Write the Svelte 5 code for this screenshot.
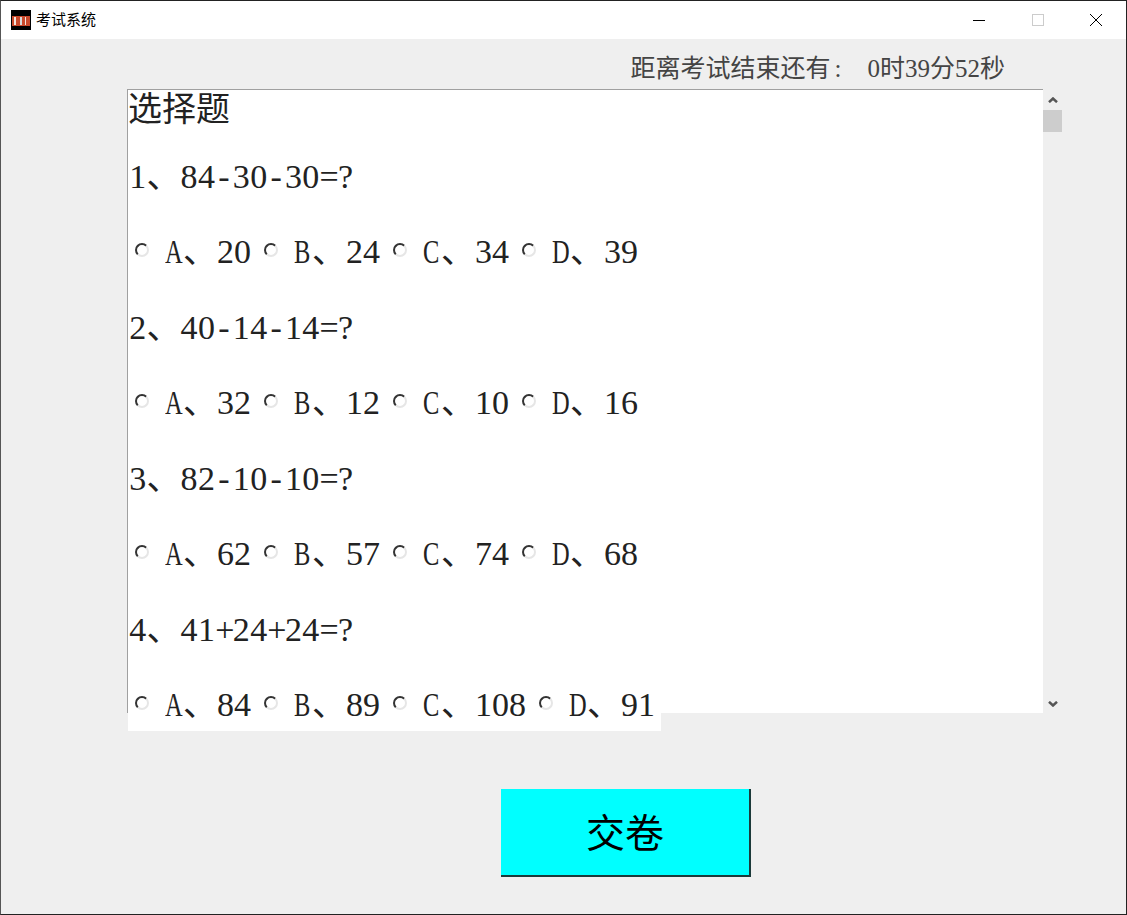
<script>
  // Exam window: choice questions with a countdown
  const questions = [
    { text: '84-30-30=?', options: ['20', '24', '34', '39'] },
    { text: '40-14-14=?', options: ['32', '12', '10', '16'] },
    { text: '82-10-10=?', options: ['62', '57', '74', '68'] },
    { text: '41+24+24=?', options: ['84', '89', '108', '91'] }
  ];
  const letters = ['A', 'B', 'C', 'D'];
</script>

{#snippet mono(s)}{#each s.split('') as c}<span class="ch" class:up={/[A-Z]/.test(c)}>{c}</span>{/each}{/snippet}

<div class="window">
  <header class="titlebar">
    <svg class="logo" width="20" height="20" viewBox="0 0 20 20">
      <rect width="20" height="20" fill="#000" />
      <rect x="1" y="6" width="18" height="10" fill="#c8492c" />
      <rect x="3" y="7" width="2" height="8" fill="#f3e4dc" />
      <rect x="9" y="7" width="2" height="8" fill="#d8d8d8" />
      <rect x="14" y="7" width="1" height="8" fill="#f3e4dc" />
    </svg>
    <span class="title">考试系统</span>
    <div class="controls">
      <svg width="12" height="12" viewBox="0 0 12 12"><path d="M0 6.5H12" stroke="#000" fill="none" /></svg>
      <svg width="12" height="12" viewBox="0 0 12 12"><rect x=".5" y=".5" width="11" height="11" stroke="#ccc" fill="none" /></svg>
      <svg width="12" height="12" viewBox="0 0 12 12"><path d="M0 0L12 12M12 0L0 12" stroke="#000" fill="none" /></svg>
    </div>
  </header>

  <main class="body">
    <div class="timer">
      <span>距离考试结束还有<span class="colon">:</span></span>
      <span>0时39分52秒</span>
    </div>

    <div class="exam">
      <section class="panel">
        <div class="content">
          <h2 class="heading">选择题</h2>
          {#each questions as q, i}
            <div class="line question">{@render mono(String(i + 1))}、{@render mono(q.text)}</div>
            <div class="line options">
              {#each q.options as opt, j}
                <label class="option">
                  <input type="radio" name={'q' + i} />
                  <span class="answer">{@render mono(letters[j])}、{@render mono(opt)}</span>
                </label>
              {/each}
            </div>
          {/each}
        </div>
      </section>
      <div class="scrollbar">
        <svg class="arrow" width="10" height="6" viewBox="0 0 10 6"><path d="M1 5.2L5 1.5L9 5.2" stroke="#555" stroke-width="2.5" fill="none" /></svg>
        <div class="thumb"></div>
        <svg class="arrow down" width="10" height="6" viewBox="0 0 10 6"><path d="M1 .8L5 4.5L9 .8" stroke="#555" stroke-width="2.5" fill="none" /></svg>
      </div>
    </div>

    <div class="actions">
      <button class="submit">交卷</button>
    </div>
  </main>
</div>

<style>
  :global(body) {
    margin: 0;
    background: #efefef;
  }

  .window {
    width: 1127px;
    height: 915px;
    box-sizing: border-box;
    border: 1px solid #222;
    border-left-color: #555;
    display: flex;
    flex-direction: column;
    background: #efefef;
    font-family: "Liberation Serif", "Noto Sans CJK SC", serif;
    color: #222;
    overflow: hidden;
  }

  .titlebar {
    height: 38px;
    flex: none;
    background: #fff;
    display: flex;
    align-items: center;
    padding-left: 10px;
  }

  .logo {
    margin-right: 5px;
  }

  .title {
    font-family: "Noto Sans CJK SC", sans-serif;
    font-size: 15px;
    color: #000;
    padding-bottom: 3px;
  }

  .controls {
    margin-left: auto;
    display: flex;
    gap: 46.5px;
    padding-right: 24px;
  }

  .body {
    flex: 1;
    padding-left: 126px;
    display: flex;
    flex-direction: column;
  }

  .timer {
    height: 50px;
    width: 878px;
    display: flex;
    justify-content: flex-end;
    align-items: center;
    gap: 26px;
    font-size: 25px;
    color: #444;
    padding-top: 4px;
    box-sizing: border-box;
  }

  .colon {
    margin-left: 4px;
  }

  .exam {
    display: flex;
    height: 624px;
  }

  .panel {
    width: 916px;
    box-sizing: border-box;
    background: #fff;
    border-top: 1px solid #a0a0a0;
    border-left: 1px solid #a0a0a0;
  }

  .content {
    width: fit-content;
    padding-right: 6px;
    background: #fff;
    display: flex;
    flex-direction: column;
    gap: 25.5px;
    position: relative;
  }

  .heading {
    margin: 0;
    height: 37px;
    line-height: 39px;
    font-size: 34px;
    font-weight: 400;
  }

  .line {
    height: 50px;
    line-height: 48px;
    font-size: 34px;
    padding-left: 1px;
    white-space: nowrap;
  }

  .ch {
    display: inline-block;
    width: 17px;
    text-align: center;
  }

  .question .ch {
    width: 17.4px;
  }

  .ch.up {
    width: 18px;
    text-align: left;
    transform: scaleX(0.72);
    transform-origin: left;
  }

  .options {
    display: flex;
    gap: 10px;
    padding-left: 4px;
  }

  .option {
    display: flex;
    align-items: center;
  }

  .answer {
    padding-bottom: 2px;
  }

  input[type="radio"] {
    appearance: none;
    width: 14px;
    height: 14px;
    margin: 0 16px 6px 3px;
    border-radius: 50%;
    border: 2px solid;
    border-color: #333 #e6e6e6 #e6e6e6 #333;
    background: #fff;
    box-sizing: border-box;
  }

  .scrollbar {
    width: 19px;
    position: relative;
    display: flex;
    flex-direction: column;
    align-items: center;
  }

  .arrow {
    margin-top: 8px;
    margin-bottom: 7px;
    flex: none;
  }

  .thumb {
    width: 19px;
    height: 22px;
    background: #cdcdcd;
  }

  .arrow.down {
    margin-top: auto;
    margin-bottom: 6px;
  }

  .actions {
    padding: 76px 0 0 374px;
  }

  .submit {
    width: 250px;
    height: 88px;
    box-sizing: border-box;
    background: #0ff;
    border: none;
    border-right: 2px solid #1c3a3a;
    border-bottom: 2px solid #1c3a3a;
    font-family: "Noto Sans CJK SC", sans-serif;
    font-size: 39px;
    color: #000;
    padding: 0 0 4px;
  }
</style>
